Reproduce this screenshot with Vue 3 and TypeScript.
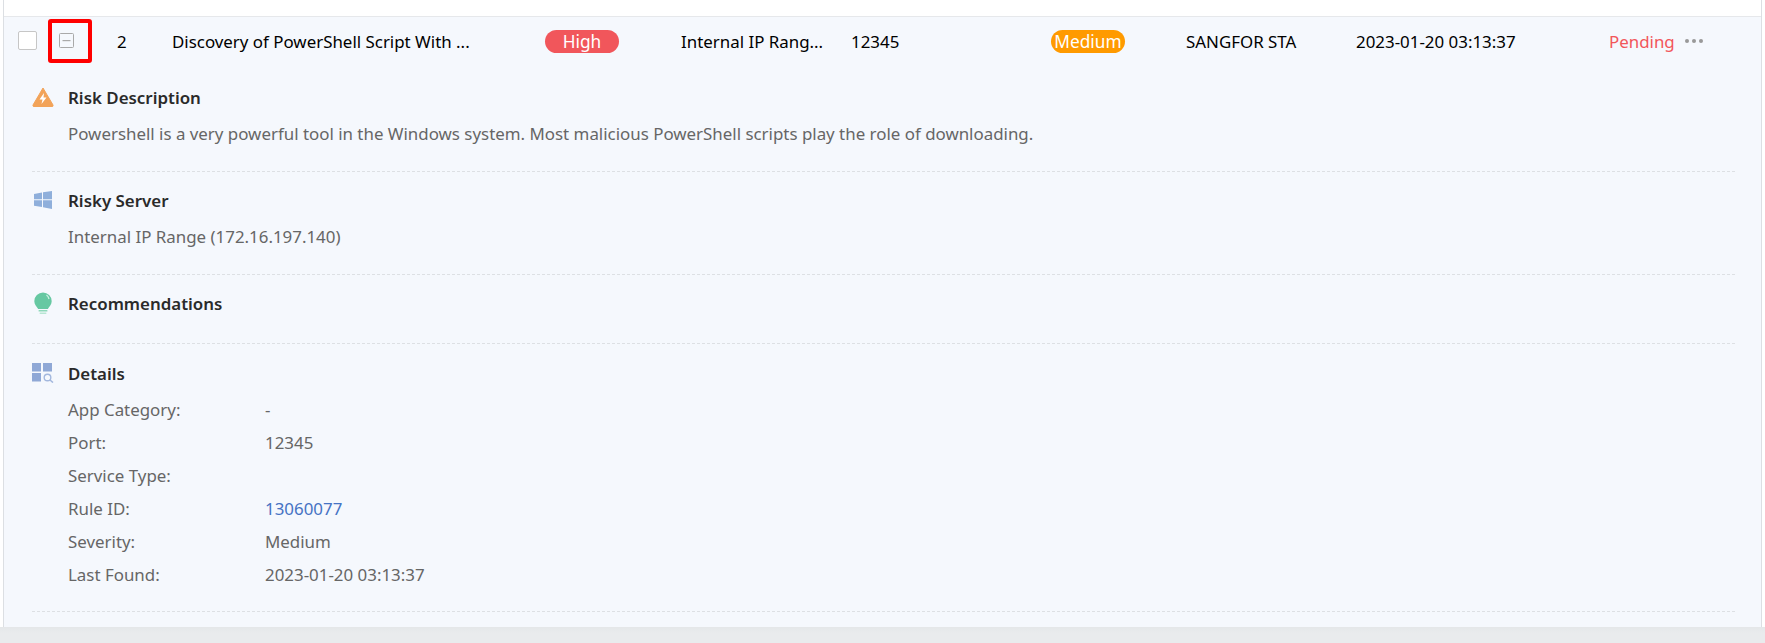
<script setup lang="ts">
interface Detail { label: string; value: string; link?: boolean }
const details: Detail[] = [
  { label: 'App Category:', value: '-' },
  { label: 'Port:', value: '12345' },
  { label: 'Service Type:', value: '' },
  { label: 'Rule ID:', value: '13060077', link: true },
  { label: 'Severity:', value: 'Medium' },
  { label: 'Last Found:', value: '2023-01-20 03:13:37' },
]
</script>

<template>
  <div class="page">
    <div class="panel">
      <div class="top"></div>
      <div class="expanded">
        <div class="row">
          <span class="check"></span>
          <span class="cell-exp">
            <svg class="minus" width="15" height="15" viewBox="0 0 15 15">
              <rect x="0.5" y="0.5" width="14" height="14" rx="1" fill="#f5f8fd" stroke="#a9a9a9" />
              <rect x="3.5" y="7" width="8" height="1.2" fill="#a9a9a9" />
            </svg>
          </span>
          <span class="txt c-no">2</span>
          <span class="txt c-title">Discovery of PowerShell Script With ...</span>
          <span class="c-high"><span class="pill red">High</span></span>
          <span class="txt c-ip">Internal IP Rang...</span>
          <span class="txt c-port">12345</span>
          <span class="c-med"><span class="pill orange">Medium</span></span>
          <span class="txt c-src">SANGFOR STA</span>
          <span class="txt c-date">2023-01-20 03:13:37</span>
          <span class="txt c-status">Pending</span>
          <svg class="dots" width="18" height="4" viewBox="0 0 18 4">
            <circle cx="2" cy="2" r="2" fill="#999" /><circle cx="9" cy="2" r="2" fill="#999" /><circle cx="16" cy="2" r="2" fill="#999" />
          </svg>
        </div>

        <div class="sections">
          <section class="sec s1">
            <h3 class="head">
              <svg class="ico" width="22" height="20" viewBox="0 0 22 20">
                <path d="M11 1 L21 18 Q21.500 19.500 20 19.500 L2 19.500 Q0.500 19.500 1 18 Z" fill="#f2a359" stroke="#f2a359" stroke-linejoin="round" />
                <path d="M12 6 L7.500 12.500 L10.500 12.500 L9.500 17 L14.500 10.500 L11.500 10.500 Z" fill="#fff" />
              </svg>
              Risk Description
            </h3>
            <p class="body">Powershell is a very powerful tool in the Windows system. Most malicious PowerShell scripts play the role of downloading.</p>
          </section>

          <section class="sec s2">
            <h3 class="head">
              <svg class="ico" width="22" height="20" viewBox="0 0 22 20">
                <path d="M2 4 L10 2.500 L10 9.300 L2 9.300 Z M11 2.300 L20 1 L20 9.300 L11 9.300 Z M2 10.300 L10 10.300 L10 17 L2 15.800 Z M11 10.300 L20 10.300 L20 19 L11 17.300 Z" fill="#8fafdb" />
              </svg>
              Risky Server
            </h3>
            <p class="body">Internal IP Range (172.16.197.140)</p>
          </section>

          <section class="sec s3">
            <h3 class="head">
              <svg class="ico" width="22" height="23" viewBox="0 0 22 23">
                <path d="M11 1 A8.700 8.700 0 0 1 19.700 9.700 C19.700 13.200 17.300 15 15.800 17.500 L6.200 17.500 C4.700 15 2.300 13.200 2.300 9.700 A8.700 8.700 0 0 1 11 1 Z" fill="#66c8a2" />
                <path d="M14.500 3.500 A7 7 0 0 1 17 7.500" stroke="#c9efe0" stroke-width="1.300" fill="none" />
                <rect x="6.500" y="18.600" width="9" height="1.500" rx="0.700" fill="#8ed8ba" />
                <rect x="7.500" y="21" width="7" height="1.500" rx="0.700" fill="#b7e6d3" />
              </svg>
              Recommendations
            </h3>
          </section>

          <section class="sec s4">
            <h3 class="head">
              <svg class="ico" width="22" height="20" viewBox="0 0 22 20">
                <rect x="0" y="0" width="9" height="8.500" fill="#8fa8d6" />
                <rect x="11" y="0" width="9" height="8.500" fill="#8fa8d6" />
                <rect x="0" y="10" width="9" height="8.500" fill="#8fa8d6" />
                <circle cx="15.500" cy="14.500" r="3.300" fill="none" stroke="#a3b8de" stroke-width="1.400" />
                <path d="M18 17 L21 19.500" stroke="#a3b8de" stroke-width="1.600" />
              </svg>
              Details
            </h3>
            <div class="details">
              <div v-for="d in details" :key="d.label" class="d-row">
                <span class="d-label">{{ d.label }}</span>
                <span class="d-value" :class="{ link: d.link }">{{ d.value }}</span>
              </div>
            </div>
          </section>
        </div>

        <div class="annot"></div>
      </div>
    </div>
    <div class="footer"></div>
  </div>
</template>

<style scoped>
.page {
  width: 1765px;
  height: 643px;
  overflow: hidden;
  display: flex;
  flex-direction: column;
  background: #fff;
  font-family: "Noto Sans", "Liberation Sans", sans-serif;
  font-size: 16.9px;
}
.panel {
  height: 627px;
  margin: 0 3px;
  border-left: 1px solid #dcdfe3;
  border-right: 1px solid #dcdfe3;
  display: flex;
  flex-direction: column;
}
.top { height: 16px; flex: none; border-bottom: 1px solid #e6e8eb; }
.expanded {
  position: relative;
  flex: 1;
  background: #f5f8fd;
}
.row {
  display: flex;
  align-items: center;
  height: 47px;
  padding-left: 14px;
  color: #000;
  white-space: nowrap;
}
.row > span { flex: none; }
.txt { padding-top: 2px; }
.check {
  width: 19px;
  height: 19px;
  box-sizing: border-box;
  border: 1px solid #c6c6c6;
  border-radius: 2px;
  background: #fff;
  margin-right: 11px;
}
.cell-exp { width: 69px; display: flex; padding-left: 11px; box-sizing: border-box; }
.c-no { width: 55px; }
.c-title { width: 373px; }
.c-high { width: 136px; padding-top: 2px; }
.c-ip { width: 170px; }
.c-port { width: 200px; }
.c-med { width: 135px; padding-top: 2px; }
.c-src { width: 170px; }
.c-date { width: 253px; }
.c-status { width: 76px; color: #f2565a; }
.pill {
  display: block;
  width: 74px;
  height: 23px;
  line-height: 23px;
  border-radius: 12px;
  text-align: center;
  color: #fff;
  font-size: 17.3px;
}
.red { background: #f1565b; }
.orange { background: #ff9a00; }
.sections { padding: 0 26px 0 28px; color: #666; }
.sec { border-bottom: 1px dashed #dde0e4; }
.s1 { height: 108px; padding-top: 17px; box-sizing: border-box; }
.s2 { height: 103px; padding-top: 12px; box-sizing: border-box; }
.s3 { height: 69px; padding-top: 12px; box-sizing: border-box; }
.s4 { height: 268px; padding-top: 13px; box-sizing: border-box; }
.head {
  margin: 0;
  display: flex;
  align-items: center;
  height: 32px;
  font-size: 16.9px;
  font-weight: 600;
  color: #2a2a2a;
  position: relative;
  padding-left: 36px;
}
.ico { position: absolute; left: 0; top: 50%; transform: translateY(-50%); }
.body {
  margin: 5px 0 0 36px;
  line-height: 32px;
  height: 32px;
}
.details { margin: 4px 0 0 36px; }
.d-row { display: flex; height: 33px; align-items: center; }
.d-label { width: 197px; }
.link { color: #4673c4; }
.annot {
  position: absolute;
  left: 44px;
  top: 2px;
  width: 44px;
  height: 44px;
  box-sizing: border-box;
  border: 4px solid #ff0000;
  border-radius: 3px;
}
.footer {
  flex: 1;
  background: linear-gradient(#e4e7e9, #e9ebed 6px);
}
</style>
